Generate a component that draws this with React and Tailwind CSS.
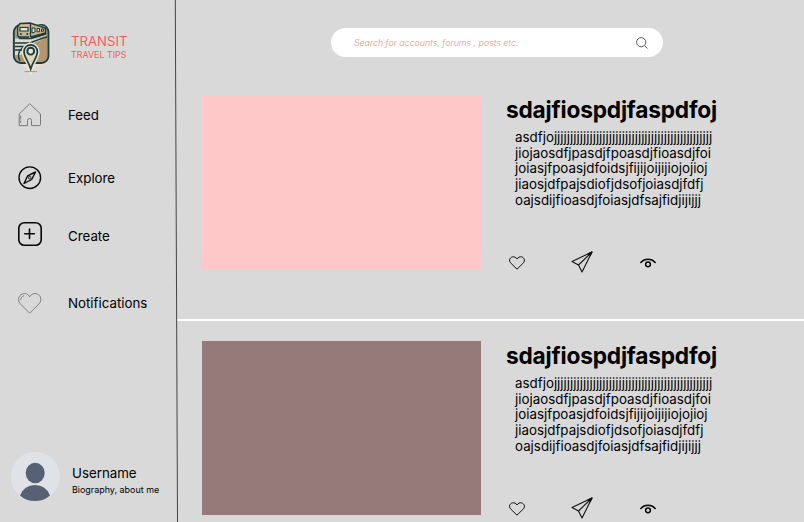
function Logo() {
  return (
    <svg className="block h-[54px] w-[38px] shrink-0" viewBox="12 21 38 54" fill="none">
      <path d="M19 23Q30 20 39 23Q49 23 50 31V57Q49 65 41 65L31 72L20 64Q13 63 13 55V32Q13 25 19 23Z" fill="#e9dfc8" />
      <rect x="13.800" y="25" width="34.700" height="38" rx="7" fill="#b3966f" stroke="#173d45" strokeWidth="1.800" />
      <path d="M15 38.500L27 39.500L47.500 37V38Q33 42 26 48L21 55H15Z" fill="#e4dbc6" />
      <path d="M15 43H29M15 46.500H25M15 50H22" stroke="#173d45" strokeWidth="1.500" />
      <path d="M47.500 37Q31 41 22 48Q16 54 20 61" stroke="#173d45" strokeWidth="1.300" />
      <path d="M20 22.500L31 22L46 27V35.500L31 39.500H20L16.500 35.500V28Z" fill="#efe6d0" />
      <path d="M20 23.500L30 23L45.500 28V34L31 38.500H20L17.500 35.500V27Z" fill="#cdb187" stroke="#173d45" strokeWidth="1.500" strokeLinejoin="round" />
      <path d="M31 37.500L45.500 33.500" stroke="#173d45" strokeWidth="2.400" />
      <path d="M30.500 23.500V37" stroke="#173d45" strokeWidth="1.300" />
      <path d="M32 28H35V32L32 33ZM37 28.500H39.500V31.500L37 32ZM41.500 29H43.500V31L41.500 31.500Z" fill="#e7d9b9" stroke="#173d45" strokeWidth="1" />
      <path d="M20 27.500H28V31H20Z" fill="#efe6d0" stroke="#173d45" strokeWidth="1.200" />
      <path d="M19 37H29" stroke="#173d45" strokeWidth="1.500" />
      <circle cx="20.800" cy="34" r="1" fill="#173d45" />
      <circle cx="27.200" cy="34" r="1" fill="#173d45" />
      <path d="M30.700 69C28.500 61 24 57.500 24 51.500A6.700 6.700 0 0 1 37.400 51.500C37.400 57.500 32.900 61 30.700 69Z" stroke="#f0e8d3" strokeWidth="4.500" />
      <path d="M30.700 69C28.500 61 24 57.500 24 51.500A6.700 6.700 0 0 1 37.400 51.500C37.400 57.500 32.900 61 30.700 69Z" fill="#e2d6ba" stroke="#173d45" strokeWidth="1.700" />
      <circle cx="30.700" cy="51.200" r="3.400" fill="#eee5d0" stroke="#173d45" strokeWidth="1.900" />
      <path d="M24.500 71.600H37" stroke="#b89469" strokeWidth="1" />
    </svg>
  );
}

function HomeIcon() {
  return (
    <svg className="block h-6 w-6" viewBox="0 0 24 24" fill="none" stroke="#6e6e6e" strokeWidth=".9" strokeLinejoin="round" strokeLinecap="round">
      <path d="M1.200 22.500V11L11.800 .7L22.500 11V21.500Q22.500 22.600 21.500 22.600H13.500V17.500Q13.500 15.500 11.500 15.500Q9.500 15.500 9.500 17.500V22.600H1.500M2.700 13V16M2.700 18V19.500" />
    </svg>
  );
}

function CompassIcon() {
  return (
    <svg className="block h-6 w-6" viewBox="0 0 24 24" fill="none" stroke="#080808" strokeWidth="1.400" strokeLinejoin="round">
      <circle cx="11.800" cy="11.700" r="10.800" />
      <path d="M6 17.500L9.700 9.800L17.500 6L13.700 13.500Z" strokeWidth="1.400" />
      <circle cx="11.700" cy="11.700" r="1.300" fill="#d9d9d9" strokeWidth=".9" />
    </svg>
  );
}

function PlusIcon() {
  return (
    <svg className="block h-6 w-6" viewBox="0 0 24 24" fill="none" stroke="#080808" strokeWidth="1.600" strokeLinecap="round">
      <rect x=".8" y=".8" width="22.400" height="22.400" rx="5.500" />
      <path d="M11.500 7V16.500M6.700 11.700H16.300" />
    </svg>
  );
}

function BigHeart() {
  return (
    <svg className="block h-6 w-6" viewBox="0 0 24 24" fill="none" stroke="#6a6a6a" strokeWidth=".8" strokeLinejoin="round">
      <path d="M11.700 22.200L2.200 12.700C-.5 9.500 .3 4.500 4.200 3C7.200 1.900 10.200 3 11.700 5.800C13.200 3 16.200 1.900 19.200 3C23.200 4.500 24 9.500 21.200 12.700Z" />
      <path d="M2.800 9C2.800 6.700 4 5.200 6 4.800" />
    </svg>
  );
}

const NAV = [
  { label: "Feed", Icon: HomeIcon, row: "h-[63px]", text: "leading-6" },
  { label: "Explore", Icon: CompassIcon, row: "h-[56px]", text: "leading-6" },
  { label: "Create", Icon: PlusIcon, row: "h-[69px]", text: "pt-[2px] leading-6" },
  { label: "Notifications", Icon: BigHeart, row: "h-6", text: "leading-6" },
];

function Sidebar() {
  return (
    <aside className="relative flex h-full w-[177px] shrink-0 flex-col">
      <div className="flex h-[103px] pt-[21px] pl-3">
        <Logo />
        <div className="ml-[21px] pt-[11px] text-[#ef6157]">
          <div className="text-[13.2px] leading-[18px]">TRANSIT</div>
          <div className="text-[8.9px] leading-[9px]">TRAVEL TIPS</div>
        </div>
      </div>
      <nav className="flex flex-col pl-[18px]">
        {NAV.map(({ label, Icon, row, text }) => (
          <div key={label} className={"flex items-start " + row}>
            <Icon />
            <span className={"ml-[26px] text-[13.3px] " + text}>{label}</span>
          </div>
        ))}
      </nav>
      <div className="mt-auto flex pb-[20px] pl-[10px]">
        <svg className="block h-[50px] w-[50px]" viewBox="0 0 50 50">
          <circle cx="25.300" cy="24.500" r="24.500" fill="#dfe3e8" />
          <ellipse cx="25.200" cy="21" rx="9.500" ry="10.300" fill="#576174" />
          <path d="M10 43.500Q14 33 25 33Q36 33 40 43.500Q34 49 25 49Q16 49 10 43.500Z" fill="#576174" />
        </svg>
        <div className="ml-3 pt-[12px] whitespace-nowrap">
          <div className="text-[13.3px] leading-[18px]">Username</div>
          <div className="mt-[2px] text-[8.95px] leading-[12px]">Biography, about me</div>
        </div>
      </div>
      <svg className="absolute top-0 left-[174px] h-[522px] w-[4px]" viewBox="0 0 4 522">
        <path d="M1.300 0L3.500 522" stroke="#444" strokeWidth="1" />
      </svg>
    </aside>
  );
}

const LINES = [
  "asdfjojjjjjjjjjjjjjjjjjjjjjjjjjjjjjjjjjjjjjjjjjjjjjjjjj",
  "jiojaosdfjpasdjfpoasdjfioasdjfoi",
  "joiasjfpoasjdfoidsjfijijoijijiojojioj",
  "jiaosjdfpajsdiofjdsofjoiasdjfdfj",
  "oajsdijfioasdjfoiasjdfsajfidjijijjj",
];

function Post({ color, inset }) {
  return (
    <article className="flex pl-[25px]">
      <div className={"h-[174px] w-[279px] shrink-0 " + color} />
      <div className={"ml-[25px] flex h-[180px] flex-col " + inset}>
        <h2 className="text-[22.700px] leading-[28px] font-bold tracking-[-0.2px]">sdajfiospdjfaspdfoj</h2>
        <div className="mt-[6px] ml-[9px] text-[13.350px] leading-[15.700px] whitespace-nowrap">
          {LINES.map((line) => (
            <div key={line}>{line}</div>
          ))}
        </div>
        <div className="mt-[41.500px] flex items-center">
          <svg className="mt-[3px] ml-[3px] h-4 w-4" viewBox="0 0 16 16" fill="none" stroke="#111" strokeWidth="1">
            <path d="M8 14.200L1.500 7.800C-.3 5.500 .8 2.500 3.300 1.900C5.300 1.400 7 2.300 8 4C9 2.300 10.700 1.400 12.700 1.900C15.200 2.500 16.300 5.500 14.500 7.800Z" />
          </svg>
          <svg className="mt-px ml-[46px] h-[22px] w-[22px]" viewBox="0 0 22 22" fill="none" stroke="#111" strokeWidth="1.100" strokeLinejoin="round">
            <path d="M1 10.500L21 1L11 21L7.500 14Z" />
            <path d="M7.500 14L21 1" />
            <path d="M21 1L17 2.800L19.300 4.500Z" fill="#111" />
          </svg>
          <svg className="mt-[2px] ml-[47px] h-4 w-4" viewBox="0 0 16 16" fill="none" stroke="#080808" strokeWidth="1.500" strokeLinecap="round">
            <path d="M.8 7.500C4.500 3.300 11.500 3.300 15.200 7.500" />
            <circle cx="8" cy="9.300" r="2.400" />
          </svg>
        </div>
      </div>
    </article>
  );
}

export default function App() {
  return (
    <div className="flex h-[522px] w-[804px] overflow-hidden bg-[#d9d9d9] font-[Inter,sans-serif] text-black">
      <Sidebar />
      <main className="flex min-w-0 flex-1 flex-col pt-7">
        <div className="ml-[154px] flex h-[29px] w-[332px] items-center justify-between rounded-full bg-white pr-[15px] pl-[23px]">
          <span className="text-[8.850px] font-light text-[#ef8f88] italic">Search for accounts, forums , posts etc.</span>
          <svg className="mt-px h-3 w-3" viewBox="0 0 12 12" fill="none" stroke="#333" strokeWidth=".8">
            <circle cx="5.200" cy="5.200" r="4.600" />
            <path d="M8.500 8.500L11.500 11.500" />
          </svg>
        </div>
        <div className="mt-[39px]">
          <Post color="bg-[#ffc8c8]" inset="" />
        </div>
        <div className="mt-[43px] mb-[20px] h-[2px] shrink-0 bg-white" />
        <Post color="bg-[#967a7a]" inset="pt-px" />
      </main>
    </div>
  );
}
